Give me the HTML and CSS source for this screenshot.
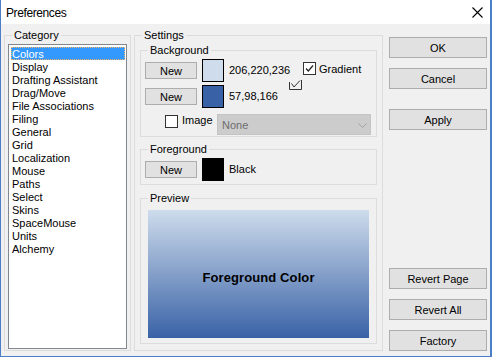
FILE: index.html
```html
<!DOCTYPE html>
<html>
<head>
<meta charset="utf-8">
<link rel="stylesheet" href="styles.css">
</head>
<body>
<div class="window">
  <div class="titlebar">
    <span class="title">Preferences</span>
    <svg class="close" width="11" height="11" viewBox="0 0 11 11"><path d="M0.5 0.5 L10.5 10.5 M10.5 0.5 L0.5 10.5" stroke="#000" stroke-width="1.1" fill="none"/></svg>
  </div>
  <div class="body">
    <fieldset class="group category">
      <legend class="legend-cat">Category</legend>
      <div class="listbox">
        <div class="item selected">Colors</div>
        <div class="item">Display</div>
        <div class="item">Drafting Assistant</div>
        <div class="item">Drag/Move</div>
        <div class="item">File Associations</div>
        <div class="item">Filing</div>
        <div class="item">General</div>
        <div class="item">Grid</div>
        <div class="item">Localization</div>
        <div class="item">Mouse</div>
        <div class="item">Paths</div>
        <div class="item">Select</div>
        <div class="item">Skins</div>
        <div class="item">SpaceMouse</div>
        <div class="item">Units</div>
        <div class="item">Alchemy</div>
      </div>
    </fieldset>

    <fieldset class="group settings">
      <legend class="legend-set">Settings</legend>

      <fieldset class="group sub background">
        <legend class="legend-sub">Background</legend>
        <div class="row">
          <button class="btn small">New</button>
          <span class="swatch swatch-light"></span>
          <span class="value value-fixed">206,220,236</span>
          <span class="checkbox checked top-check">
            <svg width="11" height="11" viewBox="0 0 11 11"><path d="M2 5.5 L4.3 8 L9 2.5" stroke="#222" stroke-width="1.2" fill="none"/></svg>
          </span>
          <span class="check-label">Gradient</span>
        </div>
        <div class="row row-rel">
          <button class="btn small">New</button>
          <span class="swatch swatch-dark"></span>
          <span class="value">57,98,166</span>
          <svg class="ghost-check" width="13" height="10" viewBox="0 0 13 10"><path d="M0.5 2 L0.5 9.5 L12.5 9.5 L12.5 0 M2.5 3.5 L5 7 L11 0.5" stroke="#333" stroke-width="1" fill="none"/></svg>
        </div>
        <div class="row row-image">
          <span class="checkbox image-check"></span>
          <span class="check-label">Image</span>
          <div class="dropdown">
            <span class="dd-text">None</span>
            <svg class="chev" width="9" height="5" viewBox="0 0 9 5"><path d="M0.5 0.5 L4.5 4.5 L8.5 0.5" stroke="#a3a3a3" stroke-width="1" fill="none"/></svg>
          </div>
        </div>
      </fieldset>

      <fieldset class="group sub foreground">
        <legend class="legend-sub">Foreground</legend>
        <div class="row">
          <button class="btn small">New</button>
          <span class="swatch swatch-black"></span>
          <span class="value">Black</span>
        </div>
      </fieldset>

      <fieldset class="group sub preview">
        <legend class="legend-prev">Preview</legend>
        <div class="preview-box">Foreground Color</div>
      </fieldset>
    </fieldset>

    <div class="actions">
      <div class="btn-group">
        <button class="btn wide">OK</button>
        <button class="btn wide">Cancel</button>
        <button class="btn wide apply">Apply</button>
      </div>
      <div class="btn-group bottom">
        <button class="btn wide">Revert Page</button>
        <button class="btn wide">Revert All</button>
        <button class="btn wide">Factory</button>
      </div>
    </div>
  </div>
</div>
</body>
</html>
```

FILE: styles.css
```css
* { box-sizing: border-box; }
html, body { margin: 0; padding: 0; background: #fff; }
body {
  font-family: "Liberation Sans", Arial, sans-serif;
  font-size: 11px;
  color: #000;
}
.window {
  width: 492px;
  height: 357px;
  border-left: 1px solid #4a7ec6;
  border-right: 2px solid #4a7ec6;
  border-bottom: 1px solid #4a7ec6;
  background: #f0f0f0;
  display: flex;
  flex-direction: column;
}
.titlebar {
  height: 25px;
  background: #fff;
  display: flex;
  align-items: center;
  padding-left: 5px;
}
.title {
  font-size: 12px;
  letter-spacing: -0.4px;
  margin-top: 1px;
}
.close {
  margin-left: auto;
  margin-right: 7px;
  margin-top: 1px;
}
.body {
  flex: 1;
  display: flex;
  padding: 5px 3px 5px 3px;
}
.group {
  margin: 0;
  border: 1px solid #dcdcdc;
  min-width: 0;
}
legend {
  padding: 0 2px;
  line-height: 13px;
  height: 13px;
  font-size: 11px;
}
.category {
  width: 127px;
  padding: 2px 3px 1px 3px;
  display: flex;
  flex-direction: column;
}
.legend-cat { margin-left: 4px; }
.listbox {
  flex: 1;
  background: #fff;
  border: 1px solid #828790;
  padding: 2px 1px 2px 1px;
}
.item {
  height: 13px;
  line-height: 15px;
  padding-left: 2px;
  white-space: nowrap;
}
.item.selected {
  background: #3399ff;
  color: #fff;
  outline: 1px dotted #f4b26a;
  outline-offset: -1px;
  margin-left: 1px;
  padding-left: 1px;
}
.settings {
  width: 249px;
  margin-left: 3px;
  padding: 2px 5px 5px 5px;
}
.legend-set { margin-left: 2px; }
.sub { padding: 2px 4px 1px 4px; }
.legend-sub { margin-left: 3px; }
.background { padding-bottom: 1px; }
.foreground { margin-top: 6px; padding-bottom: 3px; }
.preview { margin-top: 7px; padding: 5px 7px 5px 7px; }
.legend-prev { margin-left: 0; }

.row {
  display: flex;
  align-items: center;
  height: 23px;
}
.row + .row { margin-top: 3px; }
.row-rel { position: relative; }
.row.row-image { height: 21px; margin-top: 6px; align-items: flex-start; }

.btn {
  font-family: "Liberation Sans", Arial, sans-serif;
  font-size: 11px;
  color: #000;
  background: #e1e1e1;
  border: 1px solid #adadad;
  border-radius: 0;
  padding: 0;
  margin: 0;
  display: flex;
  align-items: center;
  justify-content: center;
}
.btn.small { width: 52px; height: 17px; }
.swatch {
  width: 22px;
  height: 23px;
  border: 1px solid #000;
  margin-left: 5px;
}
.swatch-light { background: rgb(206,220,236); }
.swatch-dark { background: rgb(57,98,166); }
.swatch-black { background: #000; }
.value { margin-left: 5px; margin-top: -1px; }
.value-fixed { width: 74px; }
.checkbox {
  width: 13px;
  height: 13px;
  background: #fff;
  border: 1px solid #333;
  display: flex;
  align-items: center;
  justify-content: center;
}
.top-check { align-self: flex-start; margin-top: 3px; }
.check-label { margin-left: 3px; margin-top: -3px; }
.row-image .check-label { margin-left: 4px; margin-top: 0; line-height: 13px; }
.image-check { margin-left: 20px; margin-top: 1px; }
.ghost-check {
  position: absolute;
  left: 144px;
  top: -5px;
}
.dropdown {
  margin-left: auto;
  margin-right: 1px;
  width: 154px;
  height: 21px;
  background: #cccccc;
  border: 1px solid #c4c4c4;
  display: flex;
  align-items: center;
  padding-left: 4px;
}
.dd-text { color: #6d6d6d; margin-top: 1px; }
.chev { margin-left: auto; margin-right: 3px; margin-top: 1px; }

.preview-box {
  height: 128px;
  background: linear-gradient(to bottom, rgb(206,220,236), rgb(57,98,166));
  display: flex;
  align-items: center;
  justify-content: center;
  font-weight: bold;
  font-size: 13px;
  letter-spacing: 0.1px;
  padding-top: 6px;
  color: #000;
}

.actions {
  width: 98px;
  margin-left: 6px;
  height: 322px;
  align-self: flex-start;
  display: flex;
  flex-direction: column;
  justify-content: space-between;
  padding-top: 8px;
}
.btn-group { display: flex; flex-direction: column; gap: 10px; }
.btn.wide { width: 98px; height: 21px; }
.btn.apply { margin-top: 10px; }
```
